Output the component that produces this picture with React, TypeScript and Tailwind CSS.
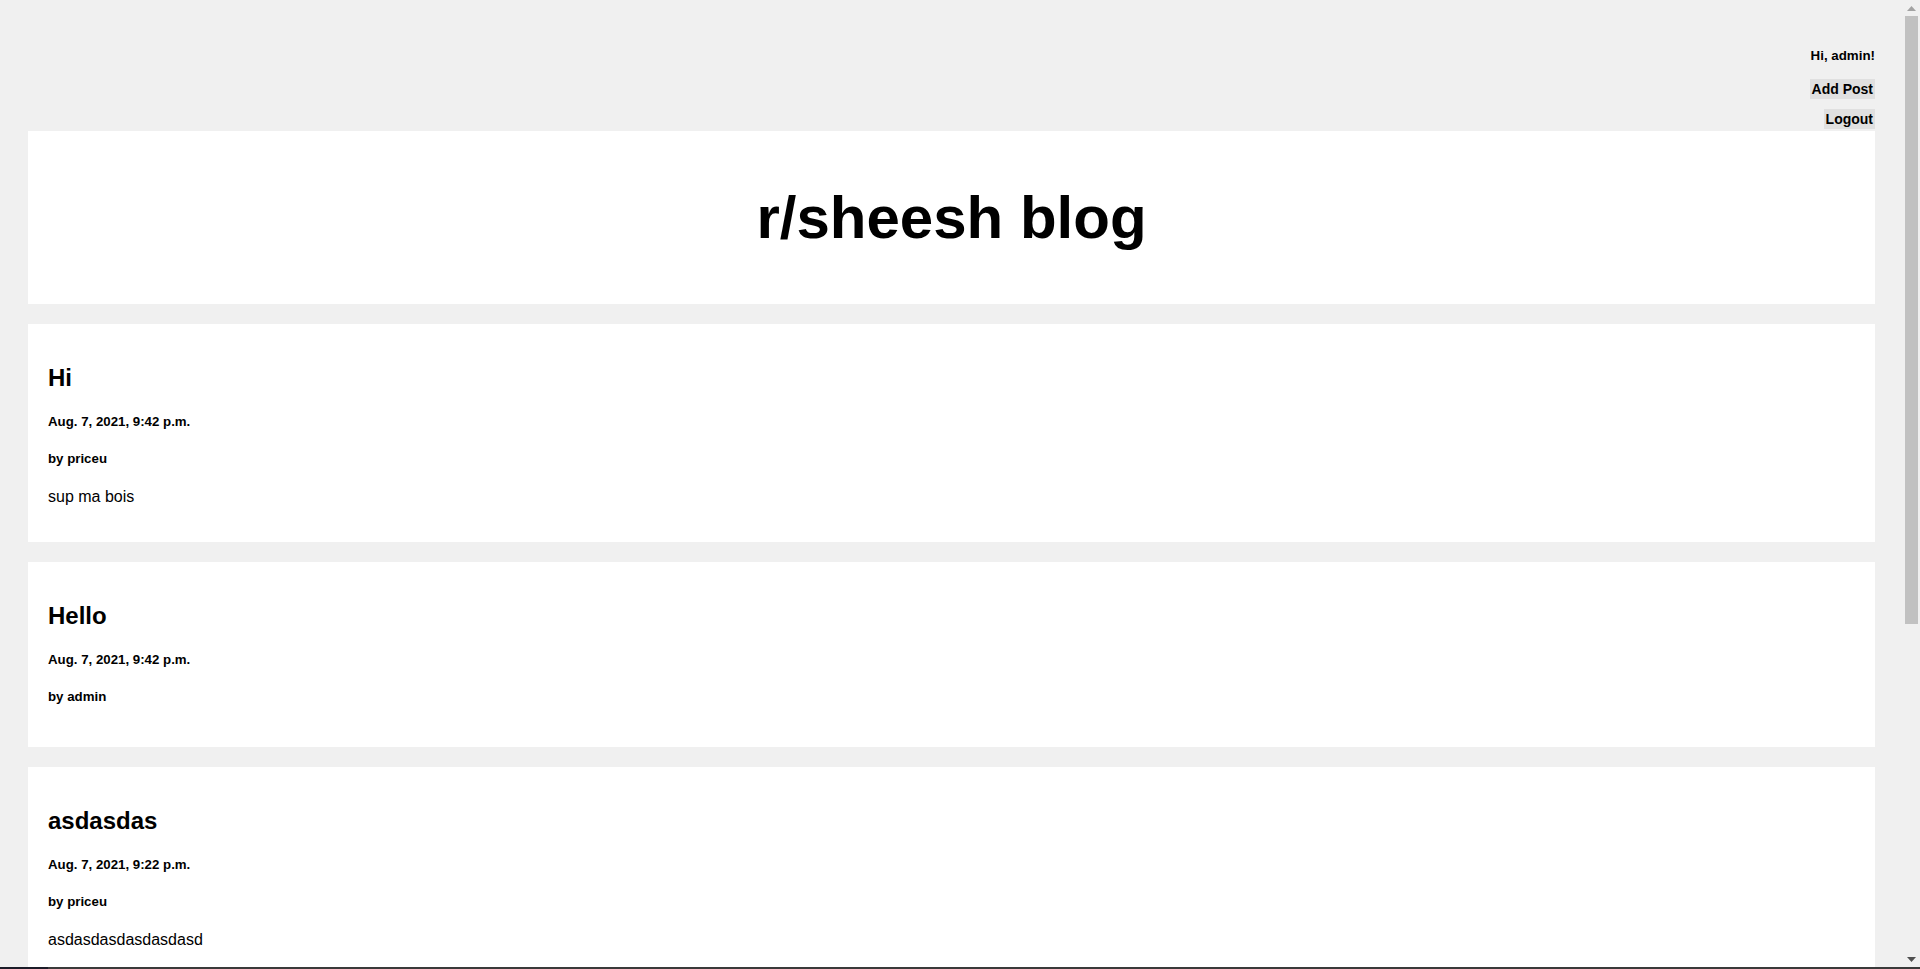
import React from "react";

type Post = { title: string; date: string; author: string; body?: string };

const posts: Post[] = [
  { title: "Hi", date: "Aug. 7, 2021, 9:42 p.m.", author: "priceu", body: "sup ma bois" },
  { title: "Hello", date: "Aug. 7, 2021, 9:42 p.m.", author: "admin" },
  { title: "asdasdas", date: "Aug. 7, 2021, 9:22 p.m.", author: "priceu", body: "asdasdasdasdasdasd" },
];

function PostCard({ post }: { post: Post }) {
  return (
    <div className="bg-white p-5 flex flex-col">
      <h2 className="mt-5 mb-[22px] text-[24px] leading-[28px] font-bold">{post.title}</h2>
      <h5 className="mb-[21px] text-[13.28px] leading-[16px] font-bold">{post.date}</h5>
      <h5 className={(post.body ? "mb-[21px]" : "mb-[22px]") + " text-[13.28px] leading-[16px] font-bold"}>
        by {post.author}
      </h5>
      {post.body && <p className="mb-4 text-[16px] leading-[18px]">{post.body}</p>}
    </div>
  );
}

export default function App() {
  return (
    <div
      className="w-[1920px] h-[969px] overflow-hidden flex flex-col bg-[#f0f0f0] text-black"
      style={{ fontFamily: '"Liberation Sans", Arial, sans-serif' }}
    >
      <div className="flex flex-1 min-h-0">
        <main className="flex-1 min-w-0 overflow-hidden px-[28px]">
          <nav className="flex flex-col items-end pt-[48px]">
            <span className="text-[13.33px] leading-[15px] font-bold">Hi, admin!</span>
            <button className="mt-[16px] bg-[#e0e0e0] px-[2px] py-[2px] text-[14px] leading-[16px] font-bold">
              Add Post
            </button>
            <button className="mt-[10px] bg-[#e0e0e0] px-[2px] py-[2px] text-[14px] leading-[16px] font-bold">
              Logout
            </button>
          </nav>
          <header className="mt-[2px] h-[173px] bg-white flex items-center justify-center">
            <h1 className="text-[60px] leading-[68px] font-bold">r/sheesh blog</h1>
          </header>
          <div className="mt-5 flex flex-col gap-5">
            {posts.map((p, i) => (
              <PostCard key={i} post={p} />
            ))}
          </div>
        </main>
        <aside className="w-[17px] shrink-0 bg-[#f0f0f0] flex flex-col items-center">
          <div className="h-[16px] flex items-center justify-center">
            <svg width="9" height="5" viewBox="0 0 9 5">
              <polygon points="4.5,0 9,5 0,5" fill="#a3a3a3" />
            </svg>
          </div>
          <div className="w-[13px] h-[608px] bg-[#c1c1c1]" />
          <div className="flex-1" />
          <div className="h-[16px] flex items-center justify-center">
            <svg width="9" height="5" viewBox="0 0 9 5">
              <polygon points="0,0 9,0 4.5,5" fill="#505050" />
            </svg>
          </div>
        </aside>
      </div>
      <div className="h-[2px] shrink-0 flex">
        <div className="w-[48px] bg-[#1c1c28]" />
        <div className="flex-1 bg-[#3a3a3a]" />
      </div>
    </div>
  );
}
